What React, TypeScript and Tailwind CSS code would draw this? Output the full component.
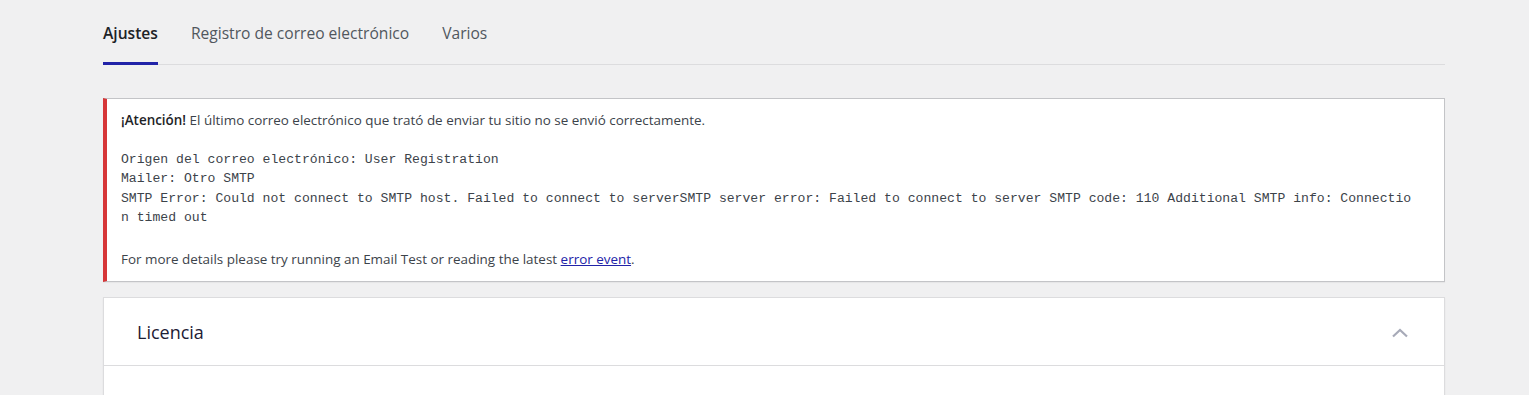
import React from 'react';

const tabs = ['Ajustes', 'Registro de correo electrónico', 'Varios'];

const App: React.FC = () => {
  return (
    <div className="min-h-[395px] bg-[#f0f0f1] font-['Open_Sans','Noto_Sans',sans-serif] text-[#3c434a]">
      <div className="ml-[103px] w-[1342px] pt-[20px]">
        {/* tabs */}
        <div className="flex gap-[33px] border-b border-[#dcdcde]">
          {tabs.map((t, i) => (
            <div
              key={t}
              className={`pb-[15px] text-[15.6px] leading-[27px] ${
                i === 0 ? 'font-semibold text-[#1d2327] border-b-[3px] border-[#2123a8] -mb-px' : 'text-[#50575e]'
              }`}
            >
              {t}
            </div>
          ))}
        </div>

        {/* error notice */}
        <div className="mt-[33px] bg-white border border-[#c3c4c7] border-l-4 border-l-[#d63638] pl-[14px] pr-3 pt-[12px] pb-[12px] text-[13.45px] leading-[19.5px] shadow-[0_1px_1px_rgba(0,0,0,0.04)]">
          <p>
            <strong className="font-semibold text-[#1d2327]">¡Atención!</strong> El último correo electrónico que trató de enviar tu sitio no se envió correctamente.
          </p>
          <pre className="mt-[19px] w-[1292px] whitespace-pre-wrap break-all font-['Liberation_Mono',monospace] text-[13.12px] leading-[19.6px] text-[#3c434a]">
{`Origen del correo electrónico: User Registration
Mailer: Otro SMTP
SMTP Error: Could not connect to SMTP host. Failed to connect to serverSMTP server error: Failed to connect to server SMTP code: 110 Additional SMTP info: Connection timed out`}
          </pre>
          <p className="mt-[22px]">
            For more details please try running an Email Test or reading the latest{' '}
            <a href="#" className="text-[#2123a8] underline">error event</a>.
          </p>
        </div>

        {/* Licencia card */}
        <div className="mt-[15px] bg-white border border-[#dcdcde] shadow-[0_1px_2px_rgba(0,0,0,0.05)]">
          <div className="flex items-center justify-between h-[68px] pl-[33px] pr-[35px] pt-[2px] border-b border-[#dcdcde]">
            <h2 className="text-[18px] font-medium text-[#1d2035]">Licencia</h2>
            <svg width="18" height="10" viewBox="0 0 18 10" fill="none">
              <path d="M2 8.5 L9 2 L16 8.5" stroke="#a7aab8" strokeWidth="2.2" />
            </svg>
          </div>
          <div className="h-[40px]" />
        </div>
      </div>
    </div>
  );
};

export default App;
